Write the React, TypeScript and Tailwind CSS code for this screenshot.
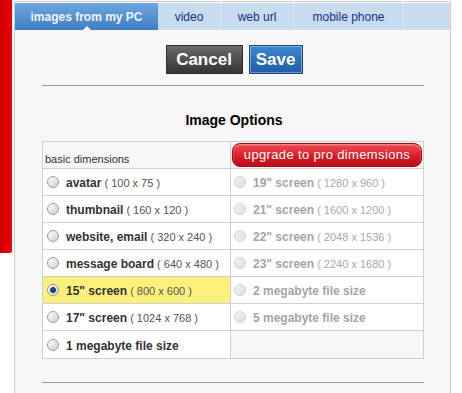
import React from "react";

type Row = { label: string; dims?: string; selected?: boolean };

const left: Row[] = [
  { label: "avatar", dims: "( 100 x 75 )" },
  { label: "thumbnail", dims: "( 160 x 120 )" },
  { label: "website, email", dims: "( 320 x 240 )" },
  { label: "message board", dims: "( 640 x 480 )" },
  { label: '15" screen', dims: "( 800 x 600 )", selected: true },
  { label: '17" screen', dims: "( 1024 x 768 )" },
  { label: "1 megabyte file size" },
];

const right: (Row | null)[] = [
  { label: '19" screen', dims: "( 1280 x 960 )" },
  { label: '21" screen', dims: "( 1600 x 1200 )" },
  { label: '22" screen', dims: "( 2048 x 1536 )" },
  { label: '23" screen', dims: "( 2240 x 1680 )" },
  { label: "2 megabyte file size" },
  { label: "5 megabyte file size" },
  null,
];

function Radio({ selected, disabled }: { selected?: boolean; disabled?: boolean }) {
  if (disabled) {
    return (
      <div className="w-[12px] h-[12px] rounded-full border border-[#d2d2d2] bg-gradient-to-br from-[#f4f4f4] to-[#dedede] shrink-0" />
    );
  }
  return (
    <div className="w-[12px] h-[12px] rounded-full border border-[#9a9a9a] bg-gradient-to-br from-[#ffffff] to-[#cfcfcf] shrink-0 flex items-center justify-center">
      {selected && <div className="w-[6px] h-[6px] rounded-full bg-[#1d4f86] border border-[#0e2f5a]" />}
    </div>
  );
}

function Cell({ row, disabled, last }: { row: Row | null; disabled?: boolean; last?: boolean }) {
  const base = `h-[27px] flex items-center ${last ? "" : "border-b border-[#cfcfcf]"}`;
  if (!row) return <div className={`${base} bg-[#f7f7f7]`} />;
  return (
    <div
      className={`${base} ${row.selected ? "bg-[#fbf07c]" : "bg-white"} ${disabled ? "pl-[3px]" : "pl-[4px]"}`}
    >
      <Radio selected={row.selected} disabled={disabled} />
      <span className="ml-[7px] whitespace-nowrap">
        <span className={`text-[12px] font-bold ${disabled ? "text-[#a4a4a4]" : "text-[#333]"}`}>{row.label}</span>
        {row.dims && (
          <span className={`text-[11px] ${disabled ? "text-[#a8a8a8]" : "text-[#555]"}`}> {row.dims}</span>
        )}
      </span>
    </div>
  );
}

export default function App() {
  return (
    <div
      className="w-[462px] h-[393px] bg-white overflow-hidden flex"
      style={{ fontFamily: '"Liberation Sans", Arial, sans-serif' }}
    >
      <div className="w-[12px] h-[253px] bg-gradient-to-r from-[#d00000] to-[#ee0000] rounded-br-[2px] shrink-0" />
      <div className="w-[2px] shrink-0" />
      <div className="w-[437px] h-[420px] mt-[1px] border-t border-l border-r border-[#cfcfcf] flex flex-col shrink-0">
        <div className="h-[1px] bg-white" />
        <div className="h-[27px] flex bg-[#c8dbef]">
          <div className="relative w-[143px] bg-gradient-to-b from-[#6ea6dd] to-[#3e7ec6] flex items-center justify-center text-[12px] font-bold text-[#eef4ff]">
            images from my PC
            <div className="absolute bottom-0 left-[68px] w-0 h-0 border-l-[4px] border-r-[4px] border-b-[4px] border-l-transparent border-r-transparent border-b-white" />
          </div>
          <div className="w-[63px] flex items-center justify-center text-[12px] text-[#1b2f86] border-r border-dotted border-[#e6eef8]">
            video
          </div>
          <div className="w-[73px] flex items-center justify-center text-[12px] text-[#1b2f86] border-r border-dotted border-[#e6eef8]">
            web url
          </div>
          <div className="w-[110px] flex items-center justify-center text-[12px] text-[#1b2f86] border-r border-dotted border-[#e6eef8]">
            mobile phone
          </div>
          <div className="flex-1" />
        </div>
        <div className="flex-1 bg-[#f7f7f7] pl-[27px] pr-[26px] flex flex-col">
          <div className="flex justify-center gap-[6px] mt-[15px] pl-[2px]">
            <div className="w-[77px] h-[29px] bg-gradient-to-b from-[#6b6b6b] to-[#353535] border border-[#2e2e2e] flex items-center justify-center text-[17px] font-bold text-white">
              Cancel
            </div>
            <div className="w-[54px] h-[29px] bg-gradient-to-b from-[#3d86d4] to-[#1f5ea8] border border-[#184a86] shadow-[inset_0_0_0_1px_rgba(255,255,255,0.35)] flex items-center justify-center text-[17px] font-bold text-white">
              Save
            </div>
          </div>
          <div className="mt-[11px] h-[1px] bg-[#9a9a9a]" />
          <div className="mt-[26px] text-center text-[14px] font-bold text-black leading-[17px] pl-[2px]">
            Image Options
          </div>
          <div className="mt-[12px] border border-[#cfcfcf] bg-[#f7f7f7] flex">
            <div className="w-[188px] border-r border-[#cfcfcf] flex flex-col">
              <div className="h-[27px] border-b border-[#cfcfcf] flex items-end pb-[3px] pl-[2px] text-[11px] leading-none text-[#333]">
                basic dimensions
              </div>
              {left.map((r, i) => (
                <Cell key={i} row={r} last={i === left.length - 1} />
              ))}
            </div>
            <div className="flex-1 flex flex-col">
              <div className="h-[27px] border-b border-[#cfcfcf] flex items-start pt-[1px] px-[1px]">
                <div className="w-full h-[24px] rounded-[8px] bg-gradient-to-b from-[#ee4a52] via-[#dd1f2c] to-[#b80d18] border border-[#a30a14] shadow-[inset_0_1px_2px_rgba(255,255,255,0.45)] flex items-center justify-center text-[13px] text-white tracking-[0.35px]">
                  upgrade to pro dimemsions
                </div>
              </div>
              {right.map((r, i) => (
                <Cell key={i} row={r} disabled last={i === right.length - 1} />
              ))}
            </div>
          </div>
          <div className="mt-[23px] h-[1px] bg-[#9a9a9a]" />
        </div>
      </div>
    </div>
  );
}
